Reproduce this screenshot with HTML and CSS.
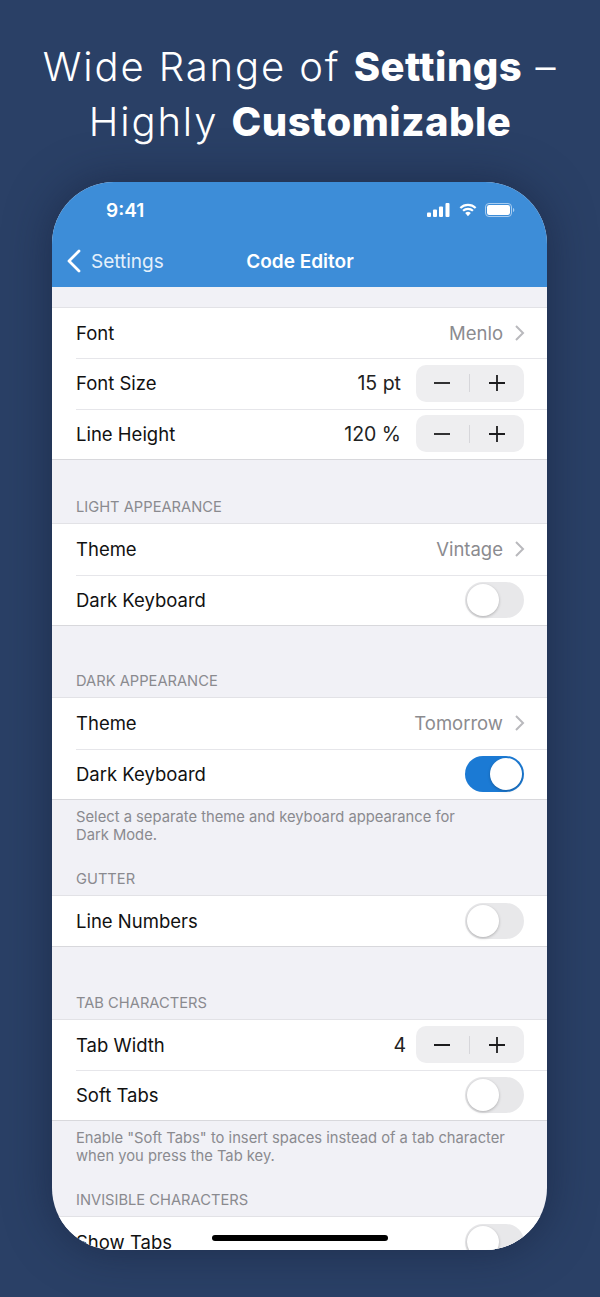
FILE: index.html
```html
<!DOCTYPE html>
<html lang="en">

<head>
    <meta charset="utf-8">
    <meta name="viewport" content="width=device-width, initial-scale=1.0">
    <title>Code Editor Settings</title>
    <link rel="stylesheet" href="styles.css">
</head>

<body>
    <h1 class="headline">Wide Range of <b>Settings</b> –<br>Highly <b>Customizable</b></h1>

    <div class="phone">
        <header class="top_bar">
            <div class="status">
                <span class="clock">9:41</span>
                <div class="status_icons">
                    <svg width="23" height="14" viewBox="0 0 23 14">
                        <rect x="0" y="9.5" width="4" height="4.5" rx="1" fill="#fff" />
                        <rect x="6" y="6.5" width="4" height="7.5" rx="1" fill="#fff" />
                        <rect x="12" y="3.5" width="4" height="10.5" rx="1" fill="#fff" />
                        <rect x="18.500" y="0" width="4" height="14" rx="1" fill="#fff" />
                    </svg>
                    <svg width="18" height="14" viewBox="0 0 20 15">
                        <path d="M1.5 5.2a12.2 12.2 0 0 1 17 0M4.5 8.4a8 8 0 0 1 11 0" fill="none" stroke="#fff" stroke-width="2.4" />
                        <path d="M6.9 10.9a4.5 4.5 0 0 1 6.2 0L10 14.4z" fill="#fff" />
                    </svg>
                    <svg width="30" height="14" viewBox="0 0 30 14">
                        <rect x="0.5" y="0.5" width="26" height="13" rx="3.5" fill="none" stroke="#a9cdf0" />
                        <rect x="2" y="2" width="23" height="10" rx="2.2" fill="#fff" />
                        <path d="M28 5v4c.8-.3 1.300-1.100 1.300-2s-.5-1.700-1.300-2z" fill="#a9cdf0" />
                    </svg>
                </div>
            </div>
            <nav class="nav">
                <a class="back">
                    <svg width="16" height="24" viewBox="0 0 16 24">
                        <path d="M13 2 3 12l10 10" fill="none" stroke="#fff" stroke-width="2.800" stroke-linecap="round" stroke-linejoin="round" />
                    </svg>
                    Settings
                </a>
                <span class="nav_title">Code Editor</span>
            </nav>
        </header>

        <main class="settings">
            <section class="first">
                <div class="group">
                    <div class="row"><span>Font</span><span class="value">Menlo</span><svg class="chevron" width="11" height="18" viewBox="0 0 11 18"><path d="m2 2 7 7-7 7" /></svg></div>
                    <div class="row"><span>Font Size</span><span class="amount">15 pt</span><div class="stepper"><svg width="18" height="18" viewBox="0 0 18 18"><path d="M1 9h16" /></svg><i></i><svg width="18" height="18" viewBox="0 0 18 18"><path d="M1 9h16M9 1v16" /></svg></div></div>
                    <div class="row"><span>Line Height</span><span class="amount">120 %</span><div class="stepper"><svg width="18" height="18" viewBox="0 0 18 18"><path d="M1 9h16" /></svg><i></i><svg width="18" height="18" viewBox="0 0 18 18"><path d="M1 9h16M9 1v16" /></svg></div></div>
                </div>
            </section>

            <section class="after_group_short">
                <h2 class="label">Light Appearance</h2>
                <div class="group">
                    <div class="row"><span>Theme</span><span class="value">Vintage</span><svg class="chevron" width="11" height="18" viewBox="0 0 11 18"><path d="m2 2 7 7-7 7" /></svg></div>
                    <div class="row"><span>Dark Keyboard</span><div class="toggle"></div></div>
                </div>
            </section>

            <section class="after_group">
                <h2 class="label">Dark Appearance</h2>
                <div class="group">
                    <div class="row"><span>Theme</span><span class="value">Tomorrow</span><svg class="chevron" width="11" height="18" viewBox="0 0 11 18"><path d="m2 2 7 7-7 7" /></svg></div>
                    <div class="row"><span>Dark Keyboard</span><div class="toggle on"></div></div>
                </div>
                <p class="note">Select a separate theme and keyboard appearance for<br>Dark Mode.</p>
            </section>

            <section class="after_note">
                <h2 class="label">Gutter</h2>
                <div class="group">
                    <div class="row"><span>Line Numbers</span><div class="toggle"></div></div>
                </div>
            </section>

            <section class="after_group">
                <h2 class="label">Tab Characters</h2>
                <div class="group">
                    <div class="row"><span>Tab Width</span><span class="amount digit">4</span><div class="stepper"><svg width="18" height="18" viewBox="0 0 18 18"><path d="M1 9h16" /></svg><i></i><svg width="18" height="18" viewBox="0 0 18 18"><path d="M1 9h16M9 1v16" /></svg></div></div>
                    <div class="row"><span>Soft Tabs</span><div class="toggle"></div></div>
                </div>
                <p class="note">Enable "Soft Tabs" to insert spaces instead of a tab character<br>when you press the Tab key.</p>
            </section>

            <section class="after_note">
                <h2 class="label">Invisible Characters</h2>
                <div class="group">
                    <div class="row"><span>Show Tabs</span><div class="toggle"></div></div>
                </div>
            </section>
        </main>

        <div class="home_bar"></div>
    </div>
</body>

</html>
```

FILE: styles.css
```css
* {
    box-sizing: border-box;
}

html,
body {
    height: 100%;
}

body {
    margin: 0;
    overflow: hidden;
    background: #2a4066;
    font-family: 'Inter', 'Liberation Sans', sans-serif;
}

.headline {
    margin: 0;
    padding-top: 39px;
    font-family: 'Inter', sans-serif;
    font-size: 40px;
    font-weight: 300;
    line-height: 55px;
    letter-spacing: 1.9px;
    text-align: center;
    color: white;
}

.headline b {
    font-weight: 800;
    letter-spacing: 0.5px;
}

.phone {
    position: relative;
    width: 495px;
    height: 1068px;
    margin: 33px 0 0 52px;
    border-radius: 62px;
    overflow: hidden;
    background: #f1f1f6;
    box-shadow: 0 0 45px rgba(20, 30, 55, 0.55);
}

.top_bar {
    height: 105px;
    background: #3d8dd8;
    color: white;
}

.status {
    display: flex;
    justify-content: space-between;
    align-items: center;
    height: 56px;
    padding: 0 32px 0 54px;
}

.clock {
    font-size: 19px;
    font-weight: 600;
}

.status_icons {
    display: flex;
    align-items: center;
    gap: 8.500px;
}

.nav {
    position: relative;
    display: flex;
    justify-content: center;
    align-items: center;
    height: 46px;
    padding-left: 1px;
}

.back {
    position: absolute;
    left: 14px;
    display: flex;
    align-items: center;
    gap: 9px;
    font-size: 19px;
    color: #e4f0fb;
}

.nav_title {
    font-size: 19px;
    font-weight: 600;
}

.settings {
    padding-top: 20px;
}

.after_group_short {
    margin-top: 38.500px;
}

.after_group {
    margin-top: 46.500px;
}

.after_note {
    margin-top: 26px;
}

.label {
    margin: 0;
    padding: 0 24px 7px;
    font-size: 14.700px;
    font-weight: 400;
    line-height: 18px;
    text-transform: uppercase;
    color: #8a8a8f;
}

.note {
    margin: 0;
    padding: 8px 0 0 24px;
    font-size: 14.750px;
    line-height: 18px;
    color: #8a8a8f;
}

.group {
    background: white;
    border-top: 1px solid #e2e2e6;
    border-bottom: 1px solid #d8d8dc;
}

.row {
    position: relative;
    display: flex;
    align-items: center;
    height: 50.250px;
    padding: 0 23px 0 24px;
    font-size: 18.500px;
    color: #111;
}

.row + .row::before {
    content: "";
    position: absolute;
    top: 0;
    left: 24px;
    right: 0;
    border-top: 1px solid #e6e6ea;
}

.row > span:first-child {
    margin-right: auto;
}

.value {
    color: #8b8b8f;
}

.chevron {
    margin-left: 11px;
    margin-right: -1px;
}

.chevron path {
    fill: none;
    stroke: #b9b9bd;
    stroke-width: 2;
}

.amount {
    margin-right: 15px;
    font-size: 19.500px;
    color: #222;
}

.amount.digit {
    margin-right: 10px;
}

.stepper {
    display: flex;
    justify-content: center;
    align-items: center;
    gap: 18px;
    width: 108px;
    height: 37px;
    padding-right: 2px;
    border-radius: 10px;
    background: #eeeef0;
}

.stepper i {
    width: 1px;
    height: 18px;
    background: #d6d6da;
}

.stepper svg path {
    fill: none;
    stroke: #1c1c1e;
    stroke-width: 1.800;
}

.toggle {
    position: relative;
    width: 59px;
    height: 36px;
    border-radius: 18px;
    background: #e8e8ea;
}

.toggle::after {
    content: "";
    position: absolute;
    top: 2px;
    left: 2px;
    width: 32px;
    height: 32px;
    border-radius: 50%;
    background: white;
    box-shadow: 0 1px 3px rgba(0, 0, 0, 0.25);
}

.toggle.on {
    background: #1b7ad4;
}

.toggle.on::after {
    left: 25px;
}

.home_bar {
    position: absolute;
    left: 160px;
    bottom: 9px;
    width: 176px;
    height: 6px;
    border-radius: 3px;
    background: black;
}
```
